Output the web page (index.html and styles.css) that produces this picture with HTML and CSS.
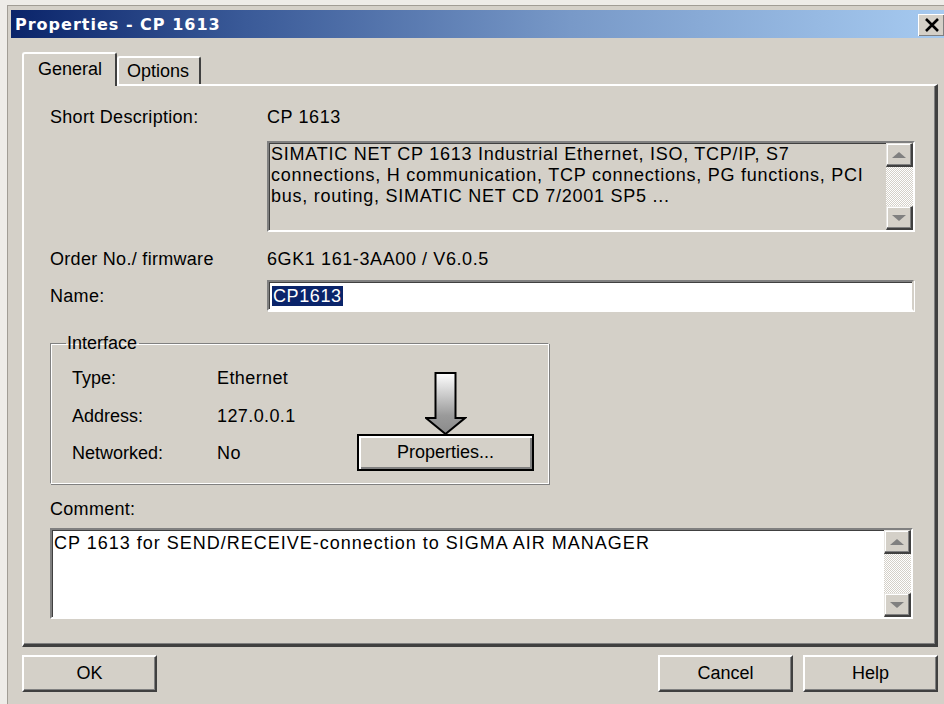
FILE: index.html
```html
<!DOCTYPE html>
<html lang="en">
<head>
<meta charset="utf-8">
<title>Properties - CP 1613</title>
<link rel="stylesheet" href="styles.css">
</head>
<body>
<div class="window">
  <div class="window-body">
    <div class="titlebar">
      <span class="title">Properties - CP 1613</span>
      <span class="close">
        <svg width="16" height="14" viewBox="0 0 16 14"><path d="M2 1 L14 13 M14 1 L2 13" stroke="#000" stroke-width="2.6" fill="none"/></svg>
      </span>
    </div>

    <div class="tabs">
      <div class="tab active">General</div>
      <div class="tab">Options</div>
    </div>

    <div class="panel">
      <div class="row r-short">
        <span class="label">Short Description:</span>
        <span class="value">CP 1613</span>
      </div>

      <div class="memo memo-desc">
        <div class="memo-text">SIMATIC NET CP 1613 Industrial Ethernet, ISO, TCP/IP, S7 connections, H communication, TCP connections, PG functions, PCI bus, routing, SIMATIC NET CD 7/2001 SP5 ...</div>
        <div class="vscroll">
          <span class="sbtn"><span class="tri up"></span></span>
          <span class="track"></span>
          <span class="sbtn"><span class="tri down"></span></span>
        </div>
      </div>

      <div class="row r-order">
        <span class="label">Order No./ firmware</span>
        <span class="value">6GK1 161-3AA00 / V6.0.5</span>
      </div>

      <div class="row r-name">
        <span class="label">Name:</span>
        <div class="edit"><span class="sel">CP1613</span></div>
      </div>

      <fieldset class="group">
        <legend>Interface</legend>
        <div class="group-body">
          <div class="info">
            <span class="ilabel">Type:</span><span class="ivalue">Ethernet</span>
            <span class="ilabel">Address:</span><span class="ivalue">127.0.0.1</span>
            <span class="ilabel">Networked:</span><span class="ivalue">No</span>
          </div>
          <div class="action">
            <svg class="pointer" width="42" height="63" viewBox="0 0 42 63">
              <defs>
                <linearGradient id="shade" x1="0" y1="0" x2="0" y2="1">
                  <stop offset="0" stop-color="#ffffff"/>
                  <stop offset="0.7" stop-color="#9a9a9a"/>
                  <stop offset="1" stop-color="#8a8a8a"/>
                </linearGradient>
              </defs>
              <path d="M10.5 1 H30.5 V46 H40 L20.5 62 L1 46 H10.5 Z" fill="url(#shade)" stroke="#000" stroke-width="2" stroke-linejoin="miter"/>
            </svg>
            <div class="btn default">Properties...</div>
          </div>
        </div>
      </fieldset>

      <div class="label comment-label">Comment:</div>
      <div class="memo memo-comment">
        <div class="memo-text">CP 1613 for SEND/RECEIVE-connection to SIGMA AIR MANAGER</div>
        <div class="vscroll">
          <span class="sbtn"><span class="tri up"></span></span>
          <span class="track"></span>
          <span class="sbtn"><span class="tri down"></span></span>
        </div>
      </div>
    </div>

    <div class="buttons">
      <div class="btn">OK</div>
      <div class="spacer"></div>
      <div class="btn">Cancel</div>
      <div class="btn">Help</div>
    </div>
  </div>
</div>
</body>
</html>
```

FILE: styles.css
```css
* { box-sizing: border-box; }

html, body {
  margin: 0;
  padding: 0;
}

body {
  width: 944px;
  height: 704px;
  overflow: hidden;
  background: #eeece8;
  font-family: "Liberation Sans", Arial, sans-serif;
  font-size: 18px;
  color: #000;
}

/* window frame */
.window {
  height: 704px;
  border-top: 5px solid #eeece8;
  border-left: 7px solid #eeece8;
}

.window-body {
  height: 100%;
  background: #d4d0c8;
  border-top: 1px solid #a19d95;
  border-left: 1px solid #a19d95;
  padding: 4px 0 0 3px;
}

/* caption */
.titlebar {
  height: 28px;
  display: flex;
  align-items: center;
  background: linear-gradient(to right, #0a246a 0%, #3a5a98 25%, #7899c8 60%, #a6caf0 100%);
  padding-left: 4px;
}

.title {
  font-family: "DejaVu Sans", Verdana, sans-serif;
  font-weight: bold;
  font-size: 16px;
  letter-spacing: 1px;
  color: #fff;
}

.close {
  margin-left: auto;
  width: 26px;
  height: 22px;
  margin-top: 1px;
  background: #d4d0c8;
  border-top: 1px solid #fff;
  border-left: 1px solid #fff;
  box-shadow: inset -1px -1px 0 #808080;
  display: flex;
  align-items: center;
  justify-content: center;
}

/* tabs */
.tabs {
  display: flex;
  align-items: flex-start;
  margin: 14px 0 0 11px;
  height: 32px;
  position: relative;
  z-index: 1;
}

.tab {
  font-size: 18px;
  border-top: 2px solid #fff;
  border-left: 2px solid #fff;
  border-right: 2px solid #404040;
  border-radius: 3px 3px 0 0;
}

.tab.active {
  height: 34px;
  padding: 0 14px;
  line-height: 30px;
  background: #d4d0c8;
  width: 95px;
}

.tab:not(.active) {
  margin-top: 4px;
  height: 28px;
  width: 84px;
  padding-left: 8px;
  line-height: 27px;
}

/* tab page */
.panel {
  margin-left: 11px;
  width: 916px;
  height: 563px;
  border-top: 2px solid #fff;
  border-left: 2px solid #fff;
  border-right: 3px solid #404040;
  border-bottom: 3px solid #404040;
  box-shadow: inset -1px -1px 0 #808080;
  padding-left: 26px;
}

.row {
  display: flex;
  align-items: center;
  line-height: 22px;
}

.label { letter-spacing: 0.3px; }
.value { letter-spacing: 0.6px; }

.row .label { width: 217px; flex: none; }

.r-short { margin-top: 20px; }
.r-order { margin-top: 16px; }
.r-name { margin-top: 10px; }

/* multi-line boxes */
.memo {
  display: flex;
  border-top: 2px solid #808080;
  border-left: 2px solid #808080;
  border-bottom: 2px solid #fff;
  border-right: 2px solid #fff;
  box-shadow: inset 1px 1px 0 #404040;
}

.memo-desc {
  margin: 13px 0 0 217px;
  width: 648px;
  height: 91px;
  background: #d4d0c8;
}

.memo-comment {
  margin-top: 8px;
  width: 863px;
  height: 91px;
  background: #fff;
}

.memo-text {
  flex: 1;
  padding: 1px 6px 0 2px;
  line-height: 21px;
  letter-spacing: 0.75px;
}

.memo-comment .memo-text { padding-top: 3px; letter-spacing: 1px; }

.vscroll {
  width: 27px;
  display: flex;
  flex-direction: column;
  flex: none;
}

.sbtn {
  height: 24px;
  background: #d4d0c8;
  border-top: 1px solid #e8e6e2;
  border-left: 1px solid #e8e6e2;
  border-right: 2px solid #404040;
  border-bottom: 2px solid #404040;
  box-shadow: inset -1px -1px 0 #808080, inset 1px 1px 0 #fff;
  display: flex;
  align-items: center;
  justify-content: center;
}

.track {
  flex: 1;
  background: repeating-conic-gradient(#ffffff 0 25%, #d4d0c8 0 50%) 0 0 / 2px 2px;
}

.tri {
  width: 0;
  height: 0;
  border-left: 7px solid transparent;
  border-right: 7px solid transparent;
}

.tri.up { border-bottom: 6px solid #808080; }
.tri.down { border-top: 6px solid #808080; }

/* single-line edit */
.edit {
  width: 647px;
  height: 31px;
  background: #fff;
  border-top: 2px solid #808080;
  border-left: 2px solid #808080;
  border-bottom: 2px solid #fff;
  border-right: 2px solid #d4d0c8;
  box-shadow: inset 1px 1px 0 #404040, 1px 1px 0 #fff;
  padding: 3px 0 0 3px;
}

.sel {
  display: inline-block;
  background: #0a246a;
  color: #fff;
  line-height: 20px;
  padding: 0 1px;
  letter-spacing: 0.6px;
}

/* group box */
.group {
  margin: 21px 0 0 0;
  width: 499px;
  height: 152px;
  min-width: 0;
  border: none;
  border-top: 1px solid #808080;
  border-left: 1px solid #808080;
  border-right: 1px solid #fff;
  border-bottom: 1px solid #fff;
  box-shadow: inset 1px 1px 0 #fff, 1px 1px 0 #808080;
  padding: 0 0 0 21px;
}

.group legend {
  padding: 0 2px 0 1px;
  margin-left: -6px;
  line-height: 22px;
}

.group-body {
  display: flex;
  align-items: flex-end;
  height: 120px;
}

.info {
  width: 285px;
  flex: none;
  align-self: flex-start;
  display: grid;
  grid-template-columns: 145px auto;
  grid-template-rows: 38px 37px 38px;
  align-items: center;
  padding-top: 5px;
  line-height: 22px;
}

.ivalue { letter-spacing: 0.4px; }

.action {
  width: 177px;
  flex: none;
  display: flex;
  flex-direction: column;
  align-items: center;
  margin-bottom: 3px;
}

.pointer { display: block; margin-bottom: -1px; }

/* push buttons */
.btn {
  width: 135px;
  height: 37px;
  display: flex;
  align-items: center;
  justify-content: center;
  background: #d4d0c8;
  border-top: 2px solid #fff;
  border-left: 2px solid #fff;
  border-right: 2px solid #404040;
  border-bottom: 2px solid #404040;
  box-shadow: inset -1px -1px 0 #808080;
  font-size: 18px;
}

.btn.default {
  width: 177px;
  height: 37px;
  border: 2px solid #000;
  box-shadow: inset 2px 2px 0 #fff, inset -2px -2px 0 #808080;
}

.comment-label { margin-top: 14px; line-height: 22px; }

.buttons {
  display: flex;
  margin: 8px 0 0 11px;
  width: 916px;
  gap: 10px;
}

.spacer { flex: 1; }
```
